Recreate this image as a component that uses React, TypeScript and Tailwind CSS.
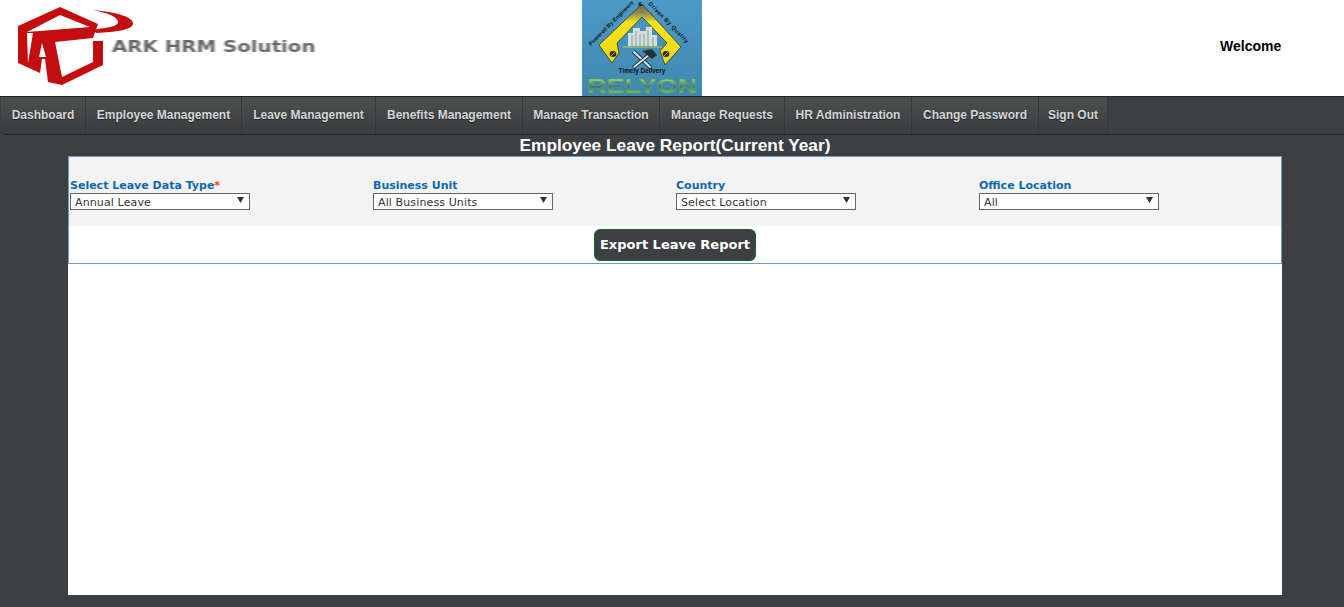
const menu = [
  { label: "Dashboard", w: "w-[85px]" },
  { label: "Employee Management", w: "w-[156px]" },
  { label: "Leave Management", w: "w-[134px]" },
  { label: "Benefits Management", w: "w-[147px]" },
  { label: "Manage Transaction", w: "w-[137px]" },
  { label: "Manage Requests", w: "w-[125px]" },
  { label: "HR Administration", w: "w-[127px]" },
  { label: "Change Password", w: "w-[127px]" },
  { label: "Sign Out", w: "w-[69px]" },
];

const filters = [
  { label: "Select Leave Data Type", value: "Annual Leave", required: true },
  { label: "Business Unit", value: "All Business Units" },
  { label: "Country", value: "Select Location" },
  { label: "Office Location", value: "All" },
];

function ArkMark() {
  return (
    <svg width="140" height="92" viewBox="0 0 140 92" className="shrink-0 blur-[0.4px]">
      {/* house outline with the A */}
      <path
        fill="#c40d0f"
        d="M60 7 L18 26 V63 L40 73 L42 59 H45 L48 82 L62 85 L103 65 V41 H93 V62 L62 77 L55 42 L93 38 L98 24 Z"
      />
      <path fill="#fff" d="M60 15 L27 32 L90 27 Z" />
      <path fill="#fff" d="M27 33 L33 33 L28 63 Z" />
      <path fill="#fff" d="M42 43 L39 57 L46 57 Z" />
      {/* swoosh */}
      <path
        fill="#c40d0f"
        d="M93 10 C116 12 134 17 133 24 C132 30 115 32 97 33 L90 30 C105 28 118 27 118 22 C118 17 108 13 93 10 Z"
      />
    </svg>
  );
}

function RelyonLogo() {
  return (
    <svg width="120" height="96" viewBox="0 0 120 96" className="block">
      <defs>
        <linearGradient id="sky" x1="0" y1="0" x2="0" y2="1">
          <stop offset="0" stopColor="#4d9ac8" />
          <stop offset="1" stopColor="#3f87ae" />
        </linearGradient>
        <linearGradient id="roof" x1="0" y1="0" x2="0" y2="1">
          <stop offset="0" stopColor="#6d675c" />
          <stop offset="0.14" stopColor="#8f8750" />
          <stop offset="0.3" stopColor="#f4e21a" />
          <stop offset="1" stopColor="#ecd916" />
        </linearGradient>
        <linearGradient id="word" x1="0" y1="0" x2="0" y2="1">
          <stop offset="0.25" stopColor="#9ccf6c" />
          <stop offset="0.55" stopColor="#35718f" />
          <stop offset="0.8" stopColor="#79bd5c" />
        </linearGradient>
        <path id="arcLeft" d="M9 46 L54 1" />
        <path id="arcRight" d="M66 4 L107 46" />
      </defs>
      <rect width="120" height="96" fill="url(#sky)" />
      {/* yellow roof */}
      <path
        fill="url(#roof)"
        stroke="#24241a"
        strokeWidth="0.7"
        d="M60 4 L99 47 L83 65 L78 51 L85 43 L60 17 L35 43 L37 53 L30 63 L17 45 Z"
      />
      <ellipse cx="31" cy="54" rx="3.4" ry="3" fill="#2b2a1c" />
      <path stroke="#d9c824" strokeWidth="0.8" d="M29 56 L33 52" />
      <ellipse cx="84" cy="54" rx="3.4" ry="3" fill="#2b2a1c" />
      <path stroke="#d9c824" strokeWidth="0.8" d="M82 56 L86 52" />
      {/* buildings */}
      <path fill="#d6dedb" d="M46 46 V33 H51 V28 H58 V31 H64 V27 H70 V35 H75 V46 Z" />
      <path stroke="#8a9b9c" strokeWidth="1" d="M50 35 V46 M54 31 V46 M58 34 V46 M62 34 V46 M66 30 V46 M71 37 V46" />
      <path stroke="#8cbc75" strokeWidth="1.6" d="M41 47 H80" />
      {/* tools */}
      <path stroke="#1f2f3a" strokeWidth="4" strokeLinecap="round" d="M52 52 L68 67" fill="none" />
      <path stroke="#cfe4f2" strokeWidth="2.2" strokeLinecap="round" d="M52 52 L68 67" fill="none" />
      <circle cx="50.5" cy="50.5" r="1.4" fill="#4d98c4" />
      <path stroke="#1f2f3a" strokeWidth="3.6" strokeLinecap="round" d="M67 55 L52 67" fill="none" />
      <path stroke="#e2e9ec" strokeWidth="1.8" strokeLinecap="round" d="M67 55 L52 67" fill="none" />
      <path fill="#2a3238" d="M60 51 L70 49 L75 55 L70 59 Z" />
      {/* lettering */}
      <text fontFamily="Liberation Sans, sans-serif" fontWeight="700" fontSize="5.6" fill="#111">
        <textPath href="#arcLeft">Powered By Engineers</textPath>
      </text>
      <text x="56" y="6" fontFamily="Liberation Sans, sans-serif" fontWeight="700" fontSize="6" fill="#111">&amp;</text>
      <text fontFamily="Liberation Sans, sans-serif" fontWeight="700" fontSize="5.6" letterSpacing="0.5" fill="#111">
        <textPath href="#arcRight">Driven By Quality</textPath>
      </text>
      <text x="60" y="73" textAnchor="middle" fontFamily="Liberation Sans, sans-serif" fontWeight="700" fontSize="6.4" fill="#111">
        Timely Delivery
      </text>
      <text
        x="60"
        y="93"
        textAnchor="middle"
        fontFamily="Liberation Sans, sans-serif"
        fontWeight="700"
        fontSize="21"
        textLength="110"
        lengthAdjust="spacingAndGlyphs"
        fill="url(#word)"
        stroke="#5f9f62"
        strokeWidth="0.7"
      >
        RELYON
      </text>
    </svg>
  );
}

export default function App() {
  return (
    <div className="flex min-h-[607px] flex-col bg-[#3c4043] font-['Liberation_Sans',sans-serif]">
      {/* top banner */}
      <header className="grid h-[96px] grid-cols-[582px_120px_1fr] bg-white">
        <div className="flex items-start">
          <ArkMark />
          <span className="ml-[-28px] mt-[37px] origin-left scale-x-[1.235] font-['DejaVu_Sans',sans-serif] text-base font-bold leading-5 text-[#666] blur-[0.7px]">
            ARK HRM Solution
          </span>
        </div>
        <RelyonLogo />
        <div className="pl-[518px] pt-[38px] text-sm font-bold leading-4 text-black">Welcome</div>
      </header>

      {/* main menu */}
      <nav className="flex h-[39px] rounded-bl-[5px] border-y border-[#222426] bg-[#3c4043] pl-px">
        {menu.map((m) => (
          <a
            key={m.label}
            className={`${m.w} flex items-center justify-center border-r border-[#34373a] bg-gradient-to-b from-[#4d4f4f] to-[#3a3d40] pb-0.5 text-xs font-bold text-[#d3d7d7] [text-shadow:0_1px_1px_#222]`}
          >
            {m.label}
          </a>
        ))}
      </nav>

      <h1 className="h-[21px] pl-1.5 text-center text-[17.3px] font-bold leading-[20px] text-white">
        Employee Leave Report(Current Year)
      </h1>

      <main className="mb-3 ml-[68px] mr-[62px] flex flex-1 flex-col bg-white">
        <section className="border border-[#6f9bc9]">
          <div className="grid h-[69px] grid-cols-[303px_303px_303px_1fr] bg-[#f3f3f3] pl-px pt-[22px]">
            {filters.map((f) => (
              <div key={f.label}>
                <label className="block font-['DejaVu_Sans',sans-serif] text-[11px] font-bold leading-[14px] text-[#0f68ad]">
                  {f.label}
                  {f.required && <span className="text-[#f03a17]">*</span>}
                </label>
                <div className="flex h-[17px] w-[180px] items-center justify-between border border-[#666] bg-white pl-1 pr-[5px] pt-px font-['DejaVu_Sans',sans-serif] text-[11px] leading-none tracking-[0.12px] text-[#333]">
                  <span>{f.value}</span>
                  <svg width="7" height="6" viewBox="0 0 7 6" className="mb-1">
                    <path d="M0 0 H7 L3.5 6 Z" fill="#333" />
                  </svg>
                </div>
              </div>
            ))}
          </div>
          <div className="flex h-[37px] items-start justify-center pt-[3px]">
            <button className="h-[32px] w-[162px] rounded-md border border-[#126a1a] bg-[#3c4043] font-['DejaVu_Sans',sans-serif] text-[13px] font-bold text-white">
              Export Leave Report
            </button>
          </div>
        </section>
      </main>
    </div>
  );
}
